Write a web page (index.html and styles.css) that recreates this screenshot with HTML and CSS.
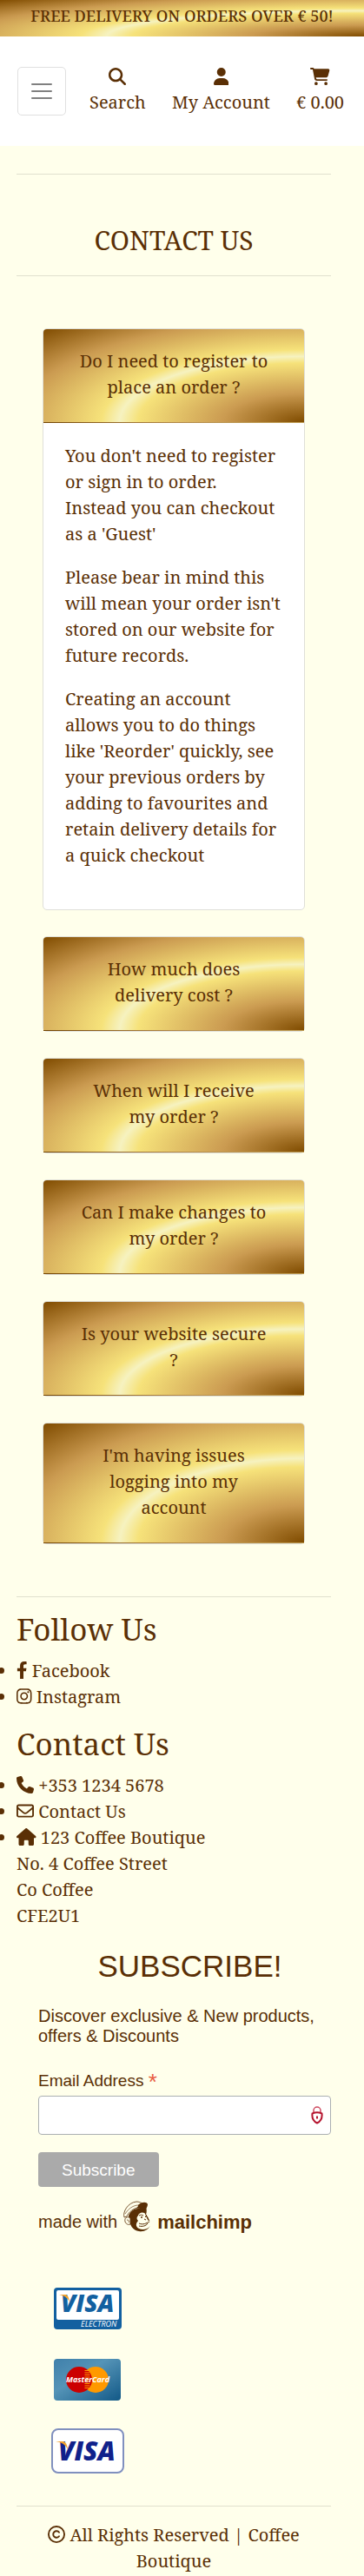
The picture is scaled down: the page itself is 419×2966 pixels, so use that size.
FILE: index.html
```html
<!DOCTYPE html>
<html lang="en">
<head>
  <meta charset="utf-8">
  <meta name="viewport" content="width=device-width, initial-scale=1">
  <title>Contact Us | Coffee Boutique</title>
  <link rel="stylesheet" href="styles.css">
</head>
<body>
  <div class="banner gold">FREE DELIVERY ON ORDERS OVER € 50!</div>

  <header class="site-header">
    <button class="toggler" type="button" aria-label="Toggle navigation">
      <svg viewBox="0 0 30 30" width="30" height="30" aria-hidden="true"><path d="M4 7h22M4 15h22M4 23h22" stroke="#808080" stroke-width="2" stroke-linecap="round"/></svg>
    </button>
    <nav class="quick-links" aria-label="Shop">
      <a class="quick-link" href="#search">
        <svg class="icon" viewBox="0 0 512 512" aria-hidden="true"><path d="M416 208c0 45.900-14.900 88.300-40 122.700L502.600 457.400c12.500 12.500 12.500 32.800 0 45.300s-32.800 12.500-45.300 0L330.700 376c-34.400 25.200-76.800 40-122.700 40C93.100 416 0 322.900 0 208S93.100 0 208 0S416 93.100 416 208zM208 352a144 144 0 1 0 0-288 144 144 0 1 0 0 288z"/></svg>
        <span>Search</span>
      </a>
      <a class="quick-link" href="#account">
        <svg class="icon" viewBox="0 0 448 512" aria-hidden="true"><path d="M224 256A128 128 0 1 0 224 0a128 128 0 1 0 0 256zm-45.700 48C79.800 304 0 383.800 0 482.300C0 498.700 13.300 512 29.700 512H418.300c16.400 0 29.700-13.300 29.700-29.700C448 383.800 368.200 304 269.700 304H178.300z"/></svg>
        <span>My Account</span>
      </a>
      <a class="quick-link" href="#bag">
        <svg class="icon" viewBox="0 0 576 512" aria-hidden="true"><path d="M0 24C0 10.700 10.700 0 24 0H69.500c22 0 41.500 12.800 50.600 32h411c26.300 0 45.500 25 38.600 50.400l-41 152.300c-8.500 31.400-37 53.300-69.500 53.300H170.700l5.400 28.500c2.200 11.300 12.100 19.500 23.600 19.500H488c13.300 0 24 10.700 24 24s-10.700 24-24 24H199.700c-34.600 0-64.300-24.600-70.700-58.500L77.400 54.500c-.7-3.800-4-6.500-7.900-6.500H24C10.700 48 0 37.300 0 24zM128 464a48 48 0 1 1 96 0 48 48 0 1 1 -96 0zm336-48a48 48 0 1 1 0 96 48 48 0 1 1 0-96z"/></svg>
        <span>€ 0.00</span>
      </a>
    </nav>
  </header>

  <main class="page">
    <hr>
    <h1>CONTACT US</h1>
    <hr>
    <div class="faq">
      <section class="card">
        <h2 class="card-header gold"><button type="button" aria-expanded="true">Do I need to register to place an order ?</button></h2>
        <div class="card-body">
          <p>You don't need to register or sign in to order. Instead you can checkout as a 'Guest'</p>
          <p>Please bear in mind this will mean your order isn't stored on our website for future records.</p>
          <p>Creating an account allows you to do things like 'Reorder' quickly, see your previous orders by adding to favourites and retain delivery details for a quick checkout</p>
        </div>
      </section>
      <section class="card"><h2 class="card-header gold"><button type="button" aria-expanded="false">How much does delivery cost ?</button></h2></section>
      <section class="card"><h2 class="card-header gold"><button type="button" aria-expanded="false">When will I receive my order ?</button></h2></section>
      <section class="card"><h2 class="card-header gold"><button type="button" aria-expanded="false">Can I make changes to my order ?</button></h2></section>
      <section class="card"><h2 class="card-header gold"><button type="button" aria-expanded="false">Is your website secure ?</button></h2></section>
      <section class="card"><h2 class="card-header gold"><button type="button" aria-expanded="false">I'm having issues logging into my account</button></h2></section>
    </div>
  </main>

  <footer class="page footer">
    <hr>
    <h3>Follow Us</h3>
    <ul class="links">
      <li><a href="#facebook"><svg class="icon" viewBox="0 0 320 512" aria-hidden="true"><path d="M279.140 288l14.220-92.660h-88.910v-60.130c0-25.350 12.420-50.060 52.240-50.060h40.420V6.260S260.430 0 225.360 0c-73.220 0-121.080 44.380-121.080 124.720v70.620H22.890V288h81.390v224h100.170V288z"/></svg> Facebook</a></li>
      <li><a href="#instagram"><svg class="icon" viewBox="0 0 448 512" aria-hidden="true"><path d="M224.100 141c-63.600 0-114.900 51.300-114.900 114.900s51.300 114.900 114.900 114.900S339 319.500 339 255.900 287.700 141 224.100 141zm0 189.600c-41.100 0-74.700-33.500-74.700-74.700s33.500-74.700 74.700-74.700 74.700 33.500 74.700 74.700-33.600 74.700-74.700 74.700zm146.400-194.300c0 14.900-12 26.800-26.800 26.800-14.900 0-26.800-12-26.800-26.800s12-26.800 26.800-26.800 26.800 12 26.800 26.800zm76.100 27.200c-1.700-35.900-9.900-67.700-36.200-93.900-26.200-26.200-58-34.400-93.900-36.200-37-2.100-147.900-2.100-184.900 0-35.800 1.700-67.600 9.900-93.900 36.100s-34.400 58-36.200 93.900c-2.100 37-2.100 147.900 0 184.900 1.700 35.900 9.900 67.700 36.200 93.900s58 34.400 93.900 36.200c37 2.100 147.900 2.100 184.900 0 35.900-1.700 67.700-9.900 93.900-36.200 26.200-26.200 34.400-58 36.200-93.900 2.100-37 2.100-147.800 0-184.800zM398.800 388c-7.800 19.600-22.900 34.700-42.600 42.600-29.500 11.700-99.500 9-132.100 9s-102.700 2.600-132.100-9c-19.600-7.800-34.700-22.900-42.600-42.600-11.700-29.500-9-99.500-9-132.100s-2.600-102.700 9-132.100c7.800-19.600 22.900-34.700 42.600-42.600 29.500-11.700 99.500-9 132.100-9s102.700-2.600 132.100 9c19.600 7.800 34.700 22.900 42.600 42.600 11.700 29.500 9 99.500 9 132.100s2.700 102.700-9 132.100z"/></svg> Instagram</a></li>
    </ul>
    <h3>Contact Us</h3>
    <ul class="links">
      <li><a href="tel:+35312345678"><svg class="icon" viewBox="0 0 512 512" aria-hidden="true"><path d="M164.900 24.600c-7.700-18.600-28-28.500-47.400-23.200l-88 24C12.100 30.200 0 46 0 64C0 311.400 200.600 512 448 512c18 0 33.800-12.100 38.600-29.500l24-88c5.300-19.400-4.600-39.700-23.200-47.400l-96-40c-16.300-6.800-35.200-2.100-46.300 11.600L304.700 368C234.300 334.700 177.300 277.700 144 207.300L193.300 167c13.700-11.200 18.400-30 11.600-46.300l-40-96z"/></svg> +353 1234 5678</a></li>
      <li><a href="#contact"><svg class="icon" viewBox="0 0 512 512" aria-hidden="true"><path d="M64 112c-8.800 0-16 7.200-16 16v22.100L220.500 291.700c20.700 17 50.400 17 71.100 0L464 150.100V128c0-8.800-7.200-16-16-16H64zM48 212.200V384c0 8.800 7.200 16 16 16H448c8.800 0 16-7.200 16-16V212.200L322 328.800c-38.400 31.500-93.700 31.500-132 0L48 212.200zM0 128C0 92.700 28.700 64 64 64H448c35.300 0 64 28.700 64 64V384c0 35.300-28.700 64-64 64H64c-35.300 0-64-28.700-64-64V128z"/></svg> Contact Us</a></li>
      <li><svg class="icon" viewBox="0 0 576 512" aria-hidden="true"><path d="M575.800 255.500c0 18-15 32.100-32 32.100h-32l.7 160.200c0 2.700-.2 5.400-.5 8.100V472c0 22.100-17.900 40-40 40H392c-22.100 0-40-17.900-40-40V384c0-17.700-14.300-32-32-32H256c-17.700 0-32 14.300-32 32v88c0 22.100-17.900 40-40 40H104c-22.100 0-40-17.900-40-40V287.600H32c-18 0-32-14-32-32.100c0-9 3-17 10-24L266.400 8c7-7 15-8 22-8s15 2 21 7L564.800 231.500c8 7 12 15 11 24z"/></svg> 123 Coffee Boutique<br>No. 4 Coffee Street<br>Co Coffee<br>CFE2U1</li>
    </ul>

    <form class="signup">
      <h3 class="signup-title">SUBSCRIBE!</h3>
      <p class="signup-intro">Discover exclusive &amp; New products, offers &amp; Discounts</p>
      <label for="email">Email Address <span class="required">*</span></label>
      <div class="email-field">
        <input id="email" type="email" required>
        <svg class="lock" viewBox="0 0 14 21" width="14" height="21" aria-hidden="true"><path d="M3 8V5a4 4 0 0 1 8 0v3" fill="none" stroke="#cf4a60" stroke-width="1.500"/><path d="M1.500 8.500c3-1.300 8-1.300 11 0 .6 5-1 9-5.500 11-4.500-2-6.100-6-5.500-11z" fill="#fff" stroke="#b5142f" stroke-width="2"/><path d="M7 11.500v3" stroke="#b5142f" stroke-width="2"/></svg>
      </div>
      <button class="subscribe" type="button">Subscribe</button>
      <a class="made-with" href="#mailchimp">
        <span>made with</span>
        <svg class="freddie" viewBox="0 0 34 36" width="34" height="36" aria-hidden="true">
          <path d="M7 17C9 12 13 9 18 9l9-2c1 3 1 6 0 9 3 3 5 8 5 12-2 5-7 8-13 7C12 34 8 29 7 17z" fill="#5a2f05"/>
          <path d="M18 17c1-4 7-5 9-1 1 3 1 5 3 7 3 0 4 3 2 6-3 4-9 5-13 3-4-2-4-6-1-9-2-2-2-4 0-6z" fill="#ffffeb"/>
          <path d="M19 17c2-1 3-1 5 0M26 15l2 2M19 26c5 2 8 0 12-2M19 29c4 1 8 0 10-3M25 21l2 1" fill="none" stroke="#5a2f05" stroke-width="1"/>
          <circle cx="22" cy="19" r="1" fill="#5a2f05"/><circle cx="27" cy="18" r="1" fill="#5a2f05"/>
          <path d="M2 19C0 13 6 2 16 1c3 0 5 1 7 2l-4 5C13 8 7 13 5 18z" fill="#ffffeb" stroke="#5a2f05" stroke-width=".8"/>
          <path d="M3 15C7 9 12 5 19 5" fill="none" stroke="#5a2f05" stroke-width=".6"/>
          <path d="M18 5c4-4 10-4 11-1 0 3-2 6-4 7-3-2-7-3-12-2 4-1 5-2 5-4z" fill="#5a2f05"/>
          <path d="M9 20c-4-3-7 0-6 4 1 3 4 4 6 3z" fill="#ffffeb" stroke="#5a2f05" stroke-width=".8"/>
          <path d="M5 22c2 0 3 1 2 3" fill="none" stroke="#5a2f05" stroke-width=".7"/>
        </svg>
        <b>mailchimp</b>
      </a>
    </form>

    <div class="payments">
      <svg viewBox="0 0 84 52" width="84" height="52" role="img" aria-label="Visa Electron">
        <rect x="3" y="2" width="78" height="48" rx="4" fill="#1260a0"/>
        <rect x="6" y="5" width="72" height="34" rx="2" fill="#fff"/>
        <text x="11" y="30" class="visa-text electron">VISA</text>
        <path d="M9 10h8q3 1 4 8-4-7-12-8z" fill="#f2a32e"/>
        <text x="34" y="47" class="electron-text">ELECTRON</text>
      </svg>
      <svg viewBox="0 0 84 52" width="84" height="52" role="img" aria-label="MasterCard">
        <defs><linearGradient id="mc" x1="0" y1="0" x2="1" y2="1"><stop offset="0" stop-color="#3f80ab"/><stop offset=".4" stop-color="#5594b7"/><stop offset="1" stop-color="#125987"/></linearGradient></defs>
        <rect x="3" y="2" width="77" height="48" rx="4" fill="url(#mc)"/>
        <circle cx="51" cy="26" r="15" fill="#ff9900"/><circle cx="32" cy="26" r="15" fill="#cc0000"/>
        <path d="M41.500 15v22" stroke="#ff9900" stroke-width="6" stroke-dasharray="1 1.500"/>
        <text x="42" y="29" text-anchor="middle" class="master-text">MasterCard</text>
      </svg>
      <svg viewBox="0 0 84 52" width="84" height="52" role="img" aria-label="Visa">
        <rect x="1" y="1" width="82" height="50" rx="7" fill="#fff" stroke="#8090bf" stroke-width="2"/>
        <text x="8" y="37" class="visa-text">VISA</text>
        <path d="M5 15h9q4 1 5 9-4-8-14-9z" fill="#f2a32e"/>
      </svg>
    </div>

    <hr>
    <p class="copyright"><svg class="icon" viewBox="0 0 512 512" aria-hidden="true"><g fill="none" stroke="#5a2f05" stroke-width="48"><circle cx="256" cy="256" r="232"/><path d="M333 199a96 96 0 1 0 0 114" stroke-linecap="round"/></g></svg> All Rights Reserved | Coffee Boutique</p>
  </footer>
</body>
</html>
```
FILE: styles.css
```css
* {
  box-sizing: border-box;
}

body {
  margin: 0;
  background: #ffffeb;
  color: #5a2f05;
  font-family: "Noto Serif", "Droid Serif", "Liberation Serif", serif;
  font-size: 20px;
  line-height: 30px;
}

a {
  color: inherit;
  text-decoration: none;
}

button {
  font: inherit;
  color: inherit;
  background: none;
  border: 0;
}

h1, h2, h3, p {
  margin: 0;
  font-weight: 400;
}

hr {
  margin: 0;
  border: 0;
  border-top: 1px solid #e1e0ce;
}

.gold {
  background-image: radial-gradient(ellipse farthest-corner at right bottom, #804c00 0%, #cb9b51 22%, #f6e27a 45%, #f6f2c0 50%, #f6e27a 55%, #cb9b51 78%, #804c00 100%);
}

.icon {
  height: 20px;
  fill: #5a2f05;
  vertical-align: -2px;
}

.banner {
  padding: 3px 0 9px;
  text-align: center;
  font-size: 18px;
  font-weight: 500;
}

.site-header {
  display: flex;
  align-items: center;
  background: #fff;
  height: 126px;
  padding: 0 23px 0 20px;
}

.toggler {
  display: flex;
  align-items: center;
  justify-content: center;
  width: 56px;
  height: 56px;
  padding: 0;
  border: 1px solid #e0e0e0;
  border-radius: 5px;
}

.quick-links {
  display: flex;
  flex: 1;
  justify-content: space-between;
  padding-left: 27px;
}

.quick-link {
  display: flex;
  flex-direction: column;
  align-items: center;
  gap: 5px;
}

.page {
  padding: 32px 38px 0 19px;
}

h1 {
  padding: 56px 0 20px;
  text-align: center;
  font-size: 30px;
  line-height: 40px;
}

.faq {
  display: flex;
  flex-direction: column;
  gap: 30px;
  padding: 60px 30px;
}

.card {
  border: 1px solid #dfdfd8;
  border-radius: 5px;
  background-color: #fff;
}

.card-header {
  padding: 16px 28px;
  border-bottom: 1px solid rgba(0, 0, 0, 0.125);
  border-radius: 4px 4px 0 0;
  font-size: 20px;
}

.card-header button {
  display: block;
  width: 100%;
  padding: 6px 13px 9px;
  text-align: center;
}

.card-body {
  padding: 23px 26px 27px 25px;
}

.card-body p {
  margin-bottom: 20px;
}

.footer {
  padding-top: 0;
}

.footer h3 {
  padding: 16px 0 12px;
  font-size: 35px;
  line-height: 42px;
}

.links {
  margin: 0 0 2px;
  padding: 0;
}

.signup {
  padding: 0 0 0 25px;
  font-family: "Liberation Sans", Arial, sans-serif;
  line-height: 23px;
}

.footer .signup-title {
  padding: 20px 0 25px 12px;
  text-align: center;
}

.signup-intro {
  margin-bottom: 28px;
}

.signup label {
  display: block;
  font-size: 19px;
}

.required {
  color: #e85c41;
  font-size: 26px;
  line-height: 0;
  vertical-align: -4px;
}

.email-field {
  position: relative;
  margin: 6px 0 10px;
  padding-bottom: 10px;
}

.email-field input {
  display: block;
  width: 100%;
  height: 45px;
  padding: 8px 32px 8px 8px;
  border: 1px solid #abb0b2;
  border-radius: 4px;
  background: #fff;
  font: inherit;
}

.lock {
  position: absolute;
  top: 12px;
  right: 9px;
}

.subscribe {
  display: block;
  height: 40px;
  padding: 0 27px;
  border-radius: 4px;
  background: #aaa;
  color: #fff;
  font-size: 19px;
}

.made-with {
  display: flex;
  align-items: flex-end;
  gap: 6px;
  margin-top: 16px;
}

.made-with b {
  font-size: 22px;
}

.payments {
  display: flex;
  flex-direction: column;
  align-items: flex-start;
  gap: 30px;
  padding: 62px 40px 37px;
}

.visa-text {
  font: italic 800 30px "Open Sans", sans-serif;
  fill: #10218b;
}

.visa-text.electron {
  font-size: 28px;
  fill: #1260a0;
}

.electron-text {
  font: italic 9px "Open Sans", sans-serif;
  fill: #fff;
}

.master-text {
  font: italic 700 9px "Open Sans", sans-serif;
  fill: #fff;
}

.copyright {
  padding: 18px 32px 2px;
  text-align: center;
}
```
